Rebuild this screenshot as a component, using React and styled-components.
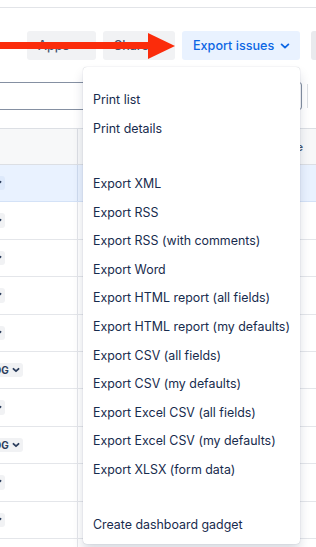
import React from "react";
import styled, { createGlobalStyle } from "styled-components";

const GlobalStyle = createGlobalStyle`
  body {
    margin: 0;
    background: #fff;
    overflow: hidden;
    font-family: Inter, "Noto Sans", sans-serif;
  }
  * { box-sizing: border-box; }
`;

const Page = styled.div`
  position: relative;
  width: 316px;
  height: 547px;
  overflow: hidden;
`;

const TopStrip = styled.div`
  height: 8px;
  border-bottom: 1px solid #e2e4e8;
`;

const Toolbar = styled.div`
  display: flex;
  gap: 7px;
  margin-top: 23px;
  padding-left: 27px;
  height: 29px;
`;

const ToolButton = styled.button`
  display: flex;
  align-items: center;
  justify-content: space-between;
  flex: none;
  width: ${(props) => (props.width ? `${props.width}px` : "auto")};
  height: 29px;
  padding: 0 ${(props) => (props.iconOnly ? "8px" : "7px 0 11px")};
  margin-left: ${(props) => (props.iconOnly ? "4px" : "0")};
  border: none;
  border-radius: 3px;
  font-family: inherit;
  font-size: 12.6px;
  font-weight: 500;
  background: ${(props) =>
    props.primary ? "#e9f2ff" : props.iconOnly ? "#e9eaed" : "#f1f2f4"};
  color: ${(props) => (props.primary ? "#0c66e4" : "#44546f")};
`;

const MenuAnchor = styled.div`
  position: relative;
  display: flex;
`;

const Menu = styled.div`
  position: absolute;
  top: calc(100% + 7px);
  right: 0;
  z-index: 5;
  width: 217px;
  padding: 5.4px 0;
  background: #fff;
  border-radius: 4px;
  box-shadow: 0 7px 11px rgba(9, 30, 66, 0.15), 0 0 1px rgba(9, 30, 66, 0.31);
`;

const MenuGroup = styled.div`
  padding-top: 13.3px;
  &:not(:last-child) {
    padding-bottom: 13px;
  }
`;

const MenuItem = styled.div`
  display: flex;
  align-items: center;
  height: 28.6px;
  padding: 0 10px;
  font-size: 12.4px;
  color: #172b4d;
  white-space: nowrap;
`;

const SearchRow = styled.div`
  display: flex;
  align-items: center;
  gap: 5px;
  margin-top: 22px;
  height: 28px;
`;

const SearchInput = styled.div`
  width: 312px;
  height: 28px;
  margin-left: -10px;
  flex: none;
  border: 1px solid #8590a2;
  border-radius: 3px;
`;

const VDivider = styled.div`
  width: 1px;
  height: 24px;
  flex: none;
  background: #dcdfe4;
`;

const Table = styled.div`
  margin-top: 18px;
`;

const HeaderRow = styled.div`
  display: grid;
  grid-template-columns: 78px 1fr;
  height: 37px;
  background: #f7f8f9;
  border-top: 1px solid #dcdfe4;
  border-bottom: 1px solid #dcdfe4;
`;

const HeaderCell = styled.div`
  display: flex;
  align-items: center;
  justify-content: ${(props) => (props.end ? "flex-end" : "flex-start")};
  padding-right: ${(props) => (props.end ? "13px" : "0")};
  border-right: ${(props) => (props.end ? "none" : "1px solid #dcdfe4")};
  font-size: 11px;
  font-weight: 600;
  color: #44546f;
`;

const Row = styled.div`
  display: grid;
  grid-template-columns: 78px 1fr;
  height: 37.4px;
  background: ${(props) => (props.selected ? "#e9f2ff" : "#fff")};
  border-bottom: 1px solid ${(props) => (props.selected ? "#d4e2f7" : "#e4e6ea")};
`;

const StatusCell = styled.div`
  display: flex;
  align-items: center;
  border-right: 1px solid
    ${(props) => (props.selected ? "#cfdcef" : "#e4e6ea")};
`;

const Lozenge = styled.span`
  display: inline-flex;
  align-items: center;
  gap: 1px;
  height: 14.4px;
  margin-left: -44px;
  padding: 0 1px 0 4px;
  border-radius: 3px;
  background: ${(props) => (props.selected ? "#dde9fb" : "#f1f2f4")};
  font-size: 10px;
  font-weight: 700;
  color: #2c3e5d;
  white-space: nowrap;
`;

const ArrowMark = styled.svg`
  position: absolute;
  left: 0;
  top: 33px;
  z-index: 6;
`;

const Chevron = ({ color = "currentColor", size = 16, weight = 1.8 }) => (
  <svg width={size} height={size} viewBox="0 0 16 16" fill="none">
    <path
      d="M4.6 6.4 8 9.6l3.4-3.2"
      stroke={color}
      strokeWidth={weight}
      strokeLinecap="round"
      strokeLinejoin="round"
    />
  </svg>
);

const menuGroups = [
  ["Print list", "Print details"],
  [
    "Export XML",
    "Export RSS",
    "Export RSS (with comments)",
    "Export Word",
    "Export HTML report (all fields)",
    "Export HTML report (my defaults)",
    "Export CSV (all fields)",
    "Export CSV (my defaults)",
    "Export Excel CSV (all fields)",
    "Export Excel CSV (my defaults)",
    "Export XLSX (form data)",
  ],
  ["Create dashboard gadget"],
];

const statuses = [
  "TO DO",
  "TO DO",
  "TO DO",
  "TO DO",
  "TO DO",
  "BACKLOG",
  "TO DO",
  "BACKLOG",
  "TO DO",
  "TO DO",
  "TO DO",
];

const App = () => {
  return (
    <Page>
      <GlobalStyle />
      <TopStrip />
      <Toolbar>
        <ToolButton width={69}>
          Apps
          <Chevron />
        </ToolButton>
        <ToolButton width={72}>
          Share
          <Chevron />
        </ToolButton>
        <MenuAnchor>
          <ToolButton primary width={118}>
            Export issues
            <Chevron />
          </ToolButton>
          <Menu>
            {menuGroups.map((group, gi) => (
              <MenuGroup key={gi}>
                {group.map((item) => (
                  <MenuItem key={item}>{item}</MenuItem>
                ))}
              </MenuGroup>
            ))}
          </Menu>
        </MenuAnchor>
        <ToolButton iconOnly>
          <svg width="16" height="16" viewBox="0 0 16 16" fill="#44546f">
            <circle cx="3" cy="8" r="1.5" />
            <circle cx="8" cy="8" r="1.5" />
            <circle cx="13" cy="8" r="1.5" />
          </svg>
        </ToolButton>
      </Toolbar>

      <SearchRow>
        <SearchInput />
        <VDivider />
      </SearchRow>

      <Table>
        <HeaderRow>
          <HeaderCell />
          <HeaderCell end>Due date</HeaderCell>
        </HeaderRow>
        {statuses.map((status, i) => (
          <Row key={i} selected={i === 0}>
            <StatusCell selected={i === 0}>
              <Lozenge selected={i === 0}>
                {status}
                <Chevron size={12} weight={2.4} />
              </Lozenge>
            </StatusCell>
            <div />
          </Row>
        ))}
      </Table>

      <ArrowMark width="176" height="27" viewBox="0 0 176 27">
        <rect x="0" y="9" width="150" height="7" fill="#fb2c0b" />
        <polygon points="148,0 175,13 148,26" fill="#fb2c0b" />
      </ArrowMark>
    </Page>
  );
};

export default App;
